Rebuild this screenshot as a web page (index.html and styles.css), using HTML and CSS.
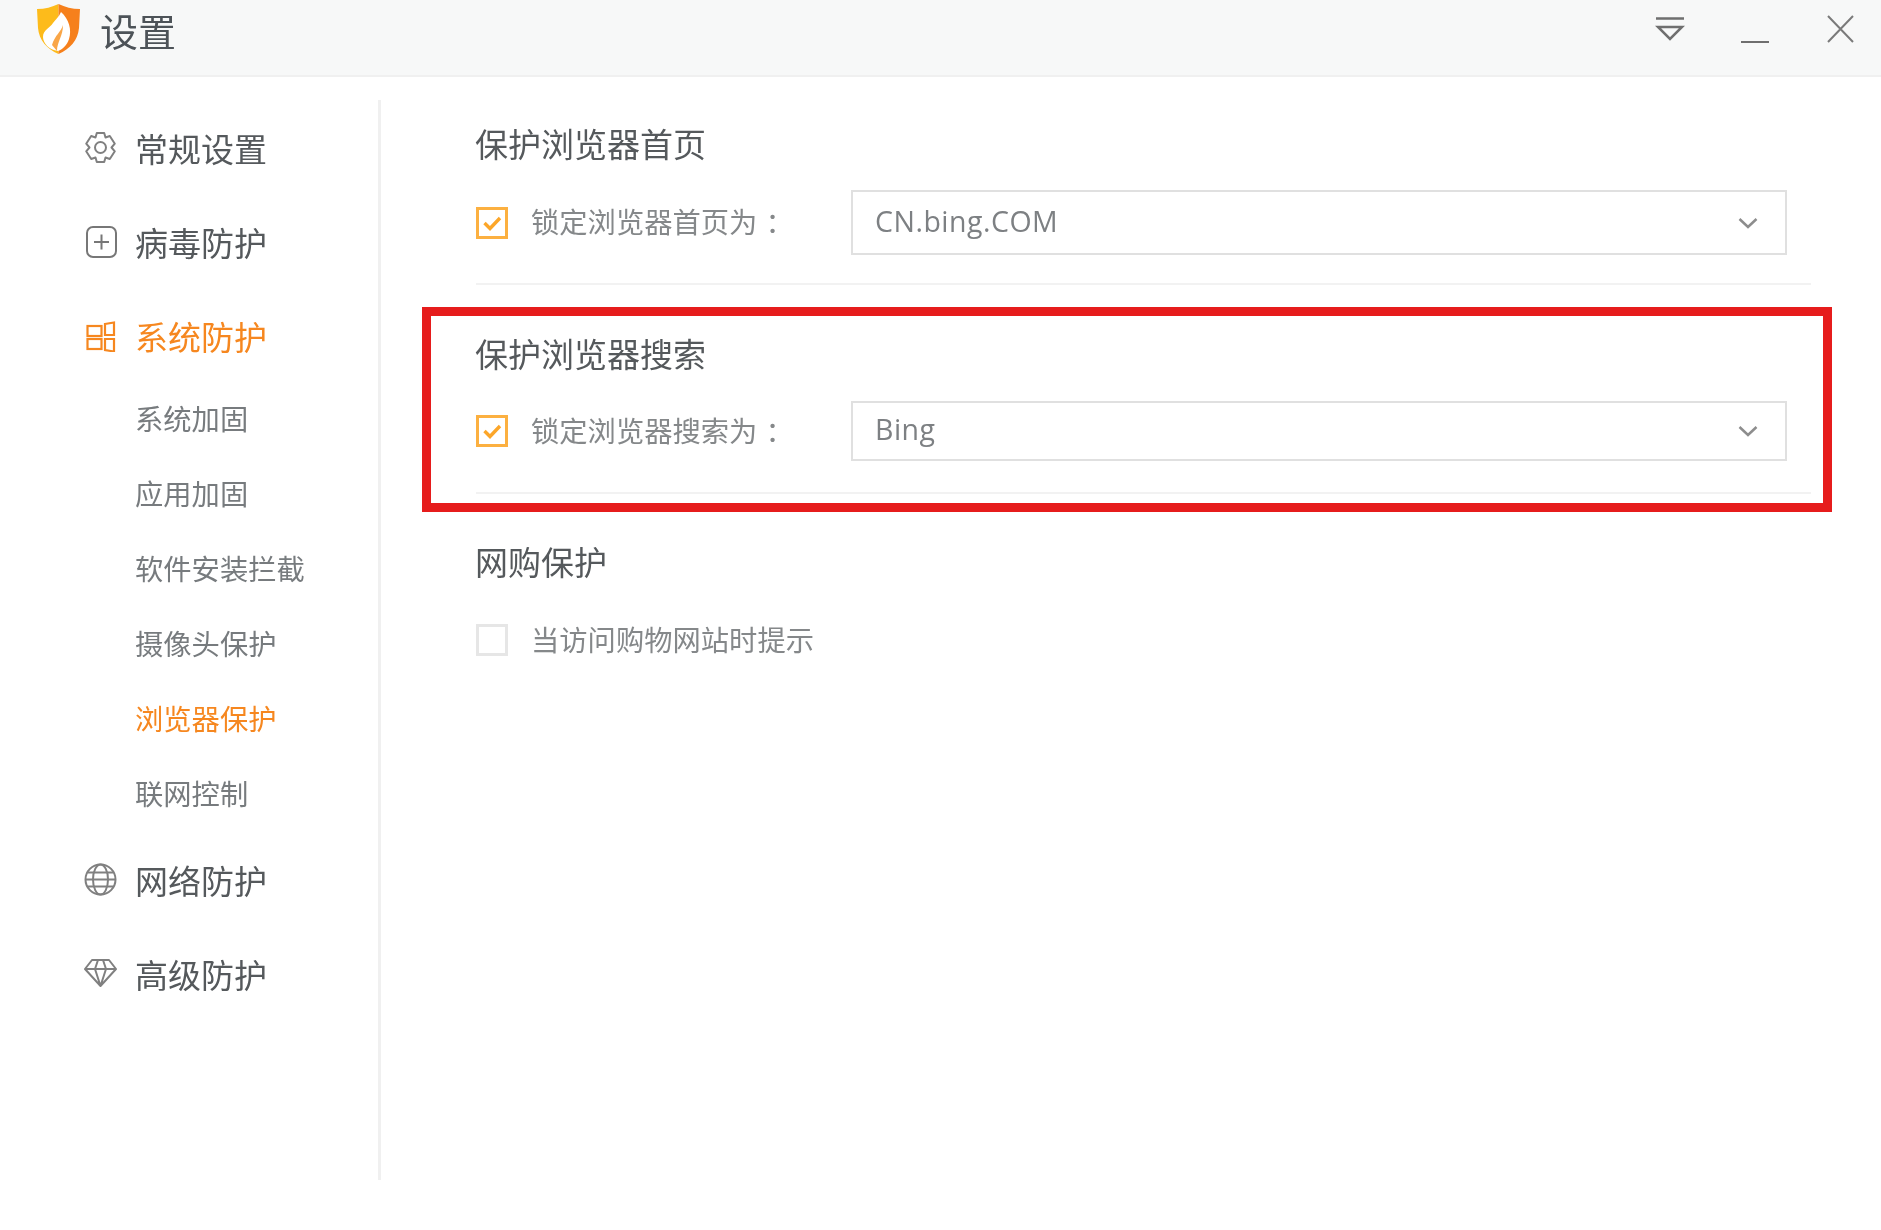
FILE: index.html
```html
<!DOCTYPE html>
<html lang="zh-CN">
<head>
<meta charset="utf-8">
<title>设置</title>
<link rel="stylesheet" href="styles.css">
</head>
<body>
<div class="window">
  <header class="titlebar">
    <svg class="logo" viewBox="0 0 43 50" width="43" height="50">
      <path d="M21.500 0 L21.500 50 C10 45 2 36 1 24 L0 5 C8 5 15 3 21.500 0Z" fill="#fdbb1b"/>
      <path d="M21.500 0 C28 3 35 5 43 5 L42 24 C41 36 33 45 21.500 50Z" fill="#f6801c"/>
      <path d="M24 8 C32 15 35 26 32 35 C30 41 26 45 21 47 C12 46 6 39 6 33 C6 26 13 24 16 19 C18 16 22 13 24 8Z" fill="#fff"/>
      <path d="M26 21 C24 28 18 31 15 41 L20 47 C20 38 26 32 26 21Z" fill="#f9a648"/>
    </svg>
    <h1 class="title">设置</h1>
    <div class="controls">
      <svg class="ctl" viewBox="0 0 30 51" width="30" height="51"><path d="M1 12.500H29M3 21H27L15 33Z" fill="none" stroke="#6f6f6f" stroke-width="2.500"/></svg>
      <svg class="ctl" viewBox="0 0 30 51" width="30" height="51"><path d="M1 36H29" stroke="#6f6f6f" stroke-width="2"/></svg>
      <svg class="ctl" viewBox="0 0 30 51" width="30" height="51"><path d="M3 10L28 36M28 10L3 36" stroke="#7a7a7a" stroke-width="2"/></svg>
    </div>
  </header>
  <div class="body">
    <nav class="sidebar">
      <a class="nav-item">
        <svg class="nav-icon" viewBox="0 0 33 33" fill="none" stroke="#808080" stroke-width="2"><path d="M12.800 2 H20.200 L21.500 6.500 L25.800 5 L30.800 12.700 L27.500 16.500 L30.800 20.300 L25.800 28 L21.500 26.500 L20.200 31 H12.800 L11.500 26.500 L7.200 28 L2.200 20.300 L5.500 16.500 L2.200 12.700 L7.200 5 L11.500 6.500Z" stroke-linejoin="round"/><circle cx="16.500" cy="16.500" r="5.500"/></svg>
        <span>常规设置</span>
      </a>
      <a class="nav-item">
        <svg class="nav-icon" viewBox="0 0 33 33" fill="none" stroke="#777" stroke-width="2"><rect x="3" y="2" width="29" height="30" rx="6"/><path d="M17.500 9.500V24.500M10 17H25"/></svg>
        <span>病毒防护</span>
      </a>
      <a class="nav-item nav-item--active">
        <svg class="nav-icon" viewBox="0 0 33 33" fill="none" stroke="#f6871f" stroke-width="2.200"><rect x="3.500" y="7" width="14" height="10"/><rect x="3.500" y="20" width="14" height="10"/><path d="M21 5L30 3.500V16H21ZM21 20H30V32.500L21 31Z"/></svg>
        <span>系统防护</span>
      </a>
      <ul class="sub-list">
        <li class="sub-item">系统加固</li>
        <li class="sub-item">应用加固</li>
        <li class="sub-item">软件安装拦截</li>
        <li class="sub-item">摄像头保护</li>
        <li class="sub-item sub-item--active">浏览器保护</li>
        <li class="sub-item">联网控制</li>
      </ul>
      <a class="nav-item">
        <svg class="nav-icon" viewBox="0 0 33 33" fill="none" stroke="#808080" stroke-width="2"><circle cx="16.500" cy="16.500" r="15"/><ellipse cx="16.500" cy="16.500" rx="7.500" ry="15"/><path d="M1.500 16.500H31.500M3.500 9.500H29.500M3.500 23.500H29.500"/></svg>
        <span>网络防护</span>
      </a>
      <a class="nav-item">
        <svg class="nav-icon" viewBox="0 0 33 33" fill="none" stroke="#808080" stroke-width="2" stroke-linejoin="round"><path d="M8 3H25L32 12L16.500 29L1 12ZM1 12H32M11 12L16.500 29L22 12M11 12L14 3M22 12L19 3"/></svg>
        <span>高级防护</span>
      </a>
    </nav>
    <main class="content">
      <section class="group group--first">
        <h2 class="group-title">保护浏览器首页</h2>
        <div class="row row--tall">
          <span class="check check--on"><svg viewBox="0 0 32 32" width="32" height="32"><path d="M8.500 16L14 21.500L24 11" fill="none" stroke="#fca629" stroke-width="3.400"/></svg></span>
          <label class="label">锁定浏览器首页为<span class="colon">：</span></label>
          <div class="select"><span class="value">CN.bing.COM</span><svg class="chev" viewBox="0 0 20 12" width="20" height="12"><path d="M1.500 2L10 10L18.500 2" fill="none" stroke="#8d8d8d" stroke-width="2.500"/></svg></div>
        </div>
      </section>
      <section class="group group--second">
        <h2 class="group-title">保护浏览器搜索</h2>
        <div class="row">
          <span class="check check--on"><svg viewBox="0 0 32 32" width="32" height="32"><path d="M8.500 16L14 21.500L24 11" fill="none" stroke="#fca629" stroke-width="3.400"/></svg></span>
          <label class="label">锁定浏览器搜索为<span class="colon">：</span></label>
          <div class="select"><span class="value">Bing</span><svg class="chev" viewBox="0 0 20 12" width="20" height="12"><path d="M1.500 2L10 10L18.500 2" fill="none" stroke="#8d8d8d" stroke-width="2.500"/></svg></div>
        </div>
      </section>
      <section class="group group--last">
        <h2 class="group-title">网购保护</h2>
        <div class="row row--plain">
          <span class="check"></span>
          <label class="label">当访问购物网站时提示</label>
        </div>
      </section>
      <div class="highlight"></div>
    </main>
  </div>
</div>
</body>
</html>
```

FILE: styles.css
```css
* { box-sizing: border-box; margin: 0; padding: 0; }
html, body { background: #fff; }
body { width: 1881px; height: 1230px; overflow: hidden; font-family: "Noto Sans CJK SC", "Noto Sans", sans-serif; }
.window { width: 1881px; height: 1230px; position: relative; filter: blur(0.5px); background: #fff; }

.titlebar { height: 77px; display: flex; align-items: center; padding: 0 26px 12px 37px; background: #f7f8f8; border-bottom: 2px solid #f0f0f0; }
.logo { margin-bottom: 5px; flex: none; }
.title { margin-left: 20px; padding-bottom: 4px; font-size: 38px; line-height: 50px; font-weight: 400; color: #4d5358; }
.controls { margin-left: auto; display: flex; gap: 55px; }

.body { display: flex; align-items: flex-start; padding-top: 23px; }
.sidebar { width: 381px; height: 1080px; padding-top: 3px; border-right: 3px solid #f0f0f0; flex: none; }
.nav-item { height: 94px; display: flex; align-items: center; padding: 0 0 5px 84px; gap: 18px; font-size: 33px; color: #55595c; }
.nav-icon { width: 33px; height: 33px; flex: none; margin-top: -1px; }
.nav-item--active { color: #f6871f; height: 92px; padding-bottom: 3px; }
.sub-list { list-style: none; margin: -2px 0 4px; }
.sub-item { height: 75px; line-height: 74px; padding-left: 135px; font-size: 28.300px; color: #777b7e; }
.sub-item--active { color: #f6871f; }

.content { position: relative; flex: none; width: 1335px; margin-left: 95px; }
.group { border-bottom: 2px solid #f2f2f2; }
.group--first { height: 185px; }
.group--second { padding-top: 26px; height: 209px; }
.group--last { padding-top: 23px; border-bottom: 0; }
.group-title { height: 90px; line-height: 87px; margin-left: -1px; font-size: 33px; font-weight: 400; color: #55595c; }
.group--second .group-title { line-height: 85px; }
.group--last .group-title { line-height: 89px; }
.row { height: 60px; display: flex; align-items: center; }
.row--tall { height: 65px; }
.row--plain { margin-top: 17px; height: 32px; }
.check { width: 32px; height: 32px; border: 3px solid #e6e6e6; flex: none; position: relative; }
.check--on { border-color: #fcb040; }
.check svg { display: block; margin: -3px; }
.label { margin-left: 23px; padding-bottom: 4px; font-size: 28.300px; width: 320px; flex: none; color: #85888a; white-space: nowrap; }
.colon { padding-left: 8px; }
.select { width: 936px; height: 100%; border: 2px solid #e0e0e0; display: flex; align-items: center; justify-content: space-between; padding: 0 27px 0 22px; font-family: "Open Sans", sans-serif; font-size: 28.500px; letter-spacing: 0.500px; color: #7d8083; }
.value { padding-bottom: 4px; }
.chev { flex: none; }

.highlight { position: absolute; left: -54px; top: 207px; width: 1410px; height: 205px; border: 9px solid #e61c1c; }
```
